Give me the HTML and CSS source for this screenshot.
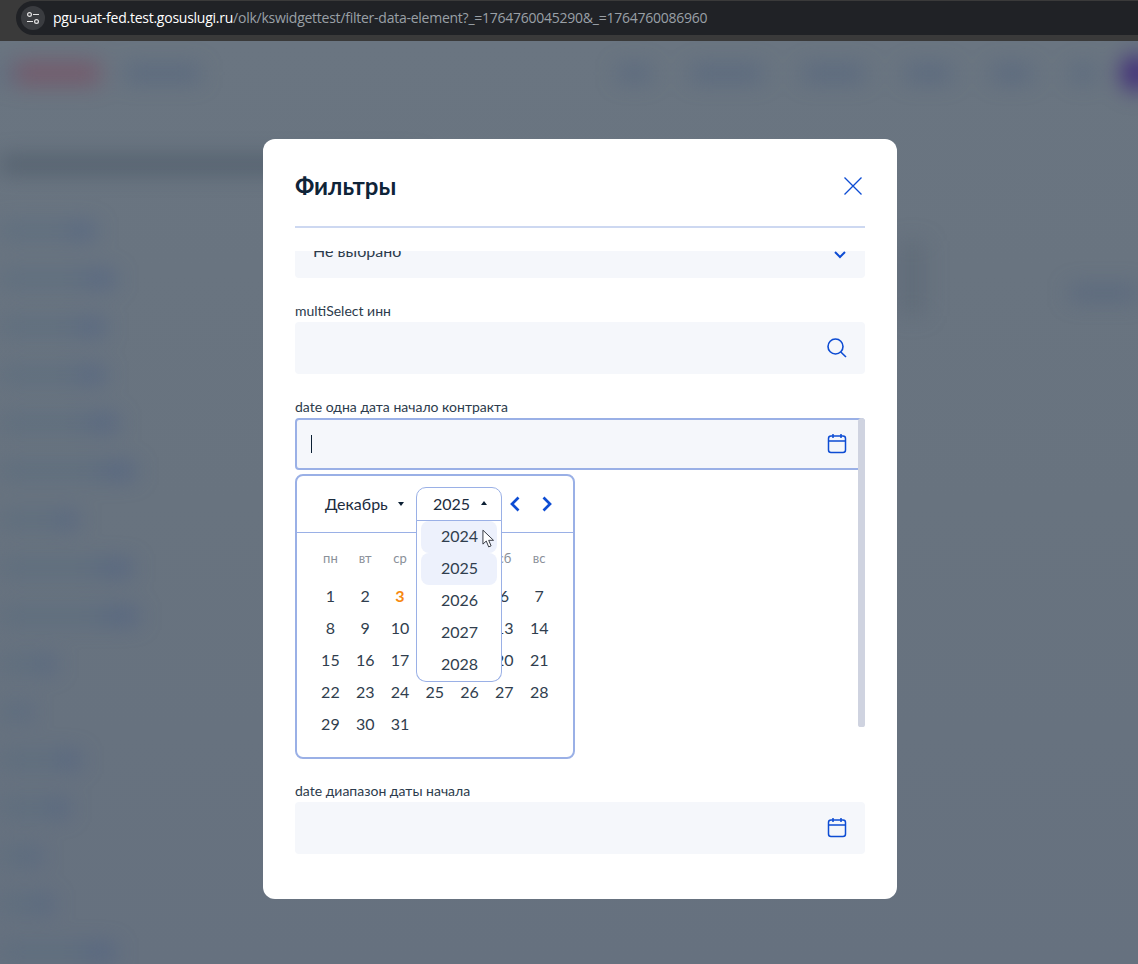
FILE: index.html
```html
<!DOCTYPE html>
<html lang="ru">
<head>
<meta charset="utf-8">
<title>Фильтры</title>
<link rel="stylesheet" href="styles.css">
</head>
<body>
<header class="chrome">
  <div class="omnibox">
    <span class="site-icon">
      <svg width="14" height="14" viewBox="0 0 14 14" fill="none" stroke="#e3e3e3" stroke-width="1.2"><circle cx="3.5" cy="3.5" r="1.9"/><path d="M7 3.5h6M1 10.5h6"/><circle cx="10.5" cy="10.5" r="1.9"/></svg>
    </span>
    <span class="url"><b>pgu-uat-fed.test.gosuslugi.ru</b>/olk/kswidgettest/filter-data-element?_=1764760045290&amp;_=1764760086960</span>
  </div>
</header>
<main class="stage">
  <div class="under">
    <div class="under-nav">
      <span class="blob" style="width:12px"></span>
      <span class="blob red" style="width:85px;margin-left:3px"></span>
      <span class="blob" style="width:75px;margin-left:25px"></span>
      <span class="nav-links">
        <span class="blob" style="width:33px"></span>
        <span class="blob" style="width:72px"></span>
        <span class="blob" style="width:62px"></span>
        <span class="blob" style="width:47px"></span>
        <span class="blob" style="width:40px"></span>
        <span class="blob" style="width:22px"></span>
        <span class="avatar"></span>
      </span>
    </div>
    <div class="under-title"></div>
    <ul class="under-list">
      <li style="width:95px"></li><li style="width:115px"></li><li style="width:105px"></li><li style="width:105px"></li>
      <li style="width:118px"></li><li style="width:135px"></li><li style="width:78px"></li><li style="width:132px"></li>
      <li style="width:138px"></li><li style="width:55px"></li><li style="width:30px"></li><li style="width:80px"></li>
      <li style="width:68px"></li><li style="width:40px"></li><li style="width:52px"></li><li style="width:115px"></li>
    </ul>
    <div class="under-side a"></div>
    <div class="under-side b"></div>
  </div>

  <section class="modal">
    <div class="modal-head">
      <h2>Фильтры</h2>
      <svg class="close" width="18" height="18" viewBox="0 0 18 18" fill="none" stroke="#0d4cd3" stroke-width="1.3"><path d="M.5.5l17 17M17.5.5l-17 17"/></svg>
    </div>
    <div class="modal-body">
      <div class="field first">
        <span class="first-text">Не выбрано</span>
        <svg class="first-chev" width="14" height="10" viewBox="0 0 14 10" fill="none" stroke="#0d4cd3" stroke-width="2"><path d="M2 2l5 5 5-5"/></svg>
      </div>
      <label class="lbl">multiSelect инн</label>
      <div class="field">
        <svg width="20" height="20" viewBox="0 0 20 20" fill="none" stroke="#0d4cd3" stroke-width="1.6"><circle cx="8.500" cy="8.500" r="7.500"/><path d="M13.800 14l5.200 5"/></svg>
      </div>
      <label class="lbl">date одна дата начало контракта</label>
      <div class="field focus">
        <i class="caret"></i>
        <svg class="ico" width="20" height="21" viewBox="0 0 20 21" fill="none" stroke="#0d4cd3" stroke-width="1.5"><rect x="1.500" y="3" width="17" height="16.500" rx="2.500"/><path d="M1.500 8h17M6 1v4M14 1v4"/></svg>
      </div>
      <div class="calendar">
        <div class="cal-head">
          <span class="month">Декабрь<i class="tri down"></i></span>
          <span class="year">2025<i class="tri up"></i></span>
          <svg class="arrow" width="12" height="18" viewBox="0 0 12 18" fill="none" stroke="#0d4cd3" stroke-width="2.700"><path d="M9.500 2.500L3 9l6.500 6.500"/></svg>
          <svg class="arrow next" width="12" height="18" viewBox="0 0 12 18" fill="none" stroke="#0d4cd3" stroke-width="2.700"><path d="M2.500 2.500L9 9l-6.500 6.500"/></svg>
        </div>
        <div class="grid dow"><span>пн</span><span>вт</span><span>ср</span><span>чт</span><span>пт</span><span>сб</span><span>вс</span></div>
        <div class="grid days">
          <span>1</span><span>2</span><span class="today">3</span><span>4</span><span>5</span><span>6</span><span>7</span>
          <span>8</span><span>9</span><span>10</span><span>11</span><span>12</span><span>13</span><span>14</span>
          <span>15</span><span>16</span><span>17</span><span>18</span><span>19</span><span>20</span><span>21</span>
          <span>22</span><span>23</span><span>24</span><span>25</span><span>26</span><span>27</span><span>28</span>
          <span>29</span><span>30</span><span>31</span>
        </div>
        <ul class="years">
          <li class="on">2024</li><li class="on">2025</li><li>2026</li><li>2027</li><li>2028</li>
        </ul>
      </div>
      <label class="lbl range">date диапазон даты начала</label>
      <div class="field">
        <svg class="ico" width="20" height="21" viewBox="0 0 20 21" fill="none" stroke="#0d4cd3" stroke-width="1.5"><rect x="1.500" y="3" width="17" height="16.500" rx="2.500"/><path d="M1.500 8h17M6 1v4M14 1v4"/></svg>
      </div>
      <div class="scrollbar"></div>
    </div>
  </section>
  <svg class="cursor" width="13" height="20" viewBox="0 0 14 21"><path d="M1 1v15l3.600-3.300L7.200 19l2.600-1.100-2.600-6H12.400z" fill="#fff" stroke="#2a2f38" stroke-width="1"/></svg>
</main>
</body>
</html>
```

FILE: styles.css
```css
* { box-sizing: border-box; }
html, body { height: 100%; }
body { margin: 0; height: 964px; overflow: hidden; font-family: Lato, "Noto Sans", sans-serif; color: #0b1f33; background: #68737f; }

.chrome { height: 41px; background: #3a3a3a; padding: 1px 0 0 16px; }
.omnibox { height: 34px; border-radius: 17px 0 0 17px; background: #202226; display: flex; align-items: center; padding-left: 5px; }
.site-icon { width: 24px; height: 24px; border-radius: 50%; background: #3a3c40; display: flex; align-items: center; justify-content: center; }
.url { margin-left: 8px; font: 14px/1 "Open Sans", "Noto Sans", sans-serif; letter-spacing: -.25px; color: #9aa0a6; white-space: nowrap; }
.url b { font-weight: 400; color: #fff; }

.stage { position: relative; height: 923px; overflow: hidden; background: linear-gradient(180deg, #6a7581 0%, #68737f 50%, #66717f 100%); }
.under { position: absolute; inset: 0; filter: blur(11px); }
.under-nav { display: flex; align-items: center; height: 64px; }
.blob { display: block; flex: none; height: 15px; background: #475c7c; opacity: .5; }
.blob.red { height: 24px; background: #83384f; opacity: .42; }
.nav-links { margin-left: auto; display: flex; align-items: center; gap: 40px; margin-right: -15px; }
.avatar { width: 32px; height: 36px; border-radius: 50%; background: #3f2a78; margin-left: -13px; }
.under-title { height: 15px; width: 420px; background: #3e4c5c; margin-top: 52px; opacity: .6; }
.under-list { list-style: none; margin: 52px 0 0; padding: 0; display: flex; flex-direction: column; gap: 34.1px; }
.under-list li { height: 14px; background: linear-gradient(90deg, #566a7e 0%, #566a7e 65%, #475c84 85%); opacity: .65; }
.under-side { position: absolute; background: #4f5c6a; opacity: .3; }
.under-side.a { left: 898px; top: 200px; width: 28px; height: 75px; }
.under-side.b { left: 1070px; top: 245px; width: 68px; height: 14px; background: #475c7c; opacity: .5; }

.modal { position: absolute; left: 263px; top: 98px; width: 634px; height: 760px; background: #fff; border-radius: 12px; padding: 0 32px; display: flex; flex-direction: column; }
.modal-head { height: 89px; flex: none; display: flex; justify-content: space-between; align-items: center; border-bottom: 2px solid #cdd8f1; padding-top: 13px; padding-bottom: 6px; }
.modal-head h2 { margin: 0; font-size: 24px; line-height: 32px; font-weight: 700; color: #0f2438; }
.close { margin-right: 3px; }
.modal-body { position: relative; margin-top: 23px; flex: 1; overflow: hidden; }

.field { height: 52px; background: #f5f7fb; border-radius: 4px; display: flex; align-items: center; justify-content: flex-end; padding: 0 18px; }
.field.first { margin-top: -25px; justify-content: space-between; font-size: 16px; color: #2c3b4c; }
.first-text { margin-bottom: 4px; }
.first-chev { margin-top: 6px; }
.field.focus { border: 2px solid #9ab0e6; justify-content: space-between; padding-left: 14px; padding-right: 16px; }
.ico { margin-bottom: 2px; }
.caret { width: 1px; height: 18px; background: #0b1f33; }
.lbl { display: block; font-size: 14px; line-height: 20px; color: #2c3b4c; margin: 23px 0 1px; }
.lbl.range { margin-top: 22px; }

.calendar { position: relative; width: 280px; height: 285px; margin-top: 4px; border: 2px solid #9ab0e6; border-radius: 8px; background: #fff; }
.cal-head { height: 57px; border-bottom: 1px solid #9ab0e6; display: flex; align-items: flex-start; padding: 11px 0 0 28px; font-size: 16px; color: #1c2c3e; }
.month { display: inline-flex; align-items: center; height: 34px; width: 91px; padding-bottom: 2px; }
.tri { display: inline-block; width: 0; height: 0; border-left: 3.5px solid transparent; border-right: 3.5px solid transparent; margin-left: 10px; }
.tri.down { border-top: 4px solid #0b1f33; margin-top: 1px; }
.tri.up { border-bottom: 4px solid #0b1f33; margin-left: 11px; }
.year { width: 86px; height: 34px; display: inline-flex; align-items: center; padding: 0 0 2px 16px; border: 1px solid #9ab0e6; border-radius: 10px 10px 0 0; background: #fff; position: relative; z-index: 2; }
.arrow { margin: 8px 0 0 7px; flex: none; }
.arrow.next { margin-left: 20px; }

.grid { display: grid; grid-template-columns: repeat(7, 34.8px); padding-left: 16px; text-align: center; }
.dow { height: 32px; margin-top: 9px; font-size: 13px; line-height: 32px; color: #8a9099; }
.days { margin-top: 6px; grid-auto-rows: 32px; font-size: 16px; line-height: 32px; color: #303e4e; }
.today { color: #f7890f; font-weight: 700; }

.years { list-style: none; position: absolute; left: 119px; top: 44px; width: 86px; height: 162px; margin: 0; padding: 1px 4px; background: #fff; border: 1px solid #9ab0e6; border-top: 0; border-radius: 0 0 10px 10px; font-size: 16px; z-index: 1; }
.years li { height: 32px; line-height: 30px; padding-left: 20px; border-radius: 8px; color: #303e4e; }
.years li.on { background: #edf1fc; }

.scrollbar { position: absolute; right: 0; top: 167px; width: 7px; height: 309px; border-radius: 4px 4px 3px 3px; background: #cfd3e0; }
.cursor { position: absolute; left: 482px; top: 488px; z-index: 5; }
```
